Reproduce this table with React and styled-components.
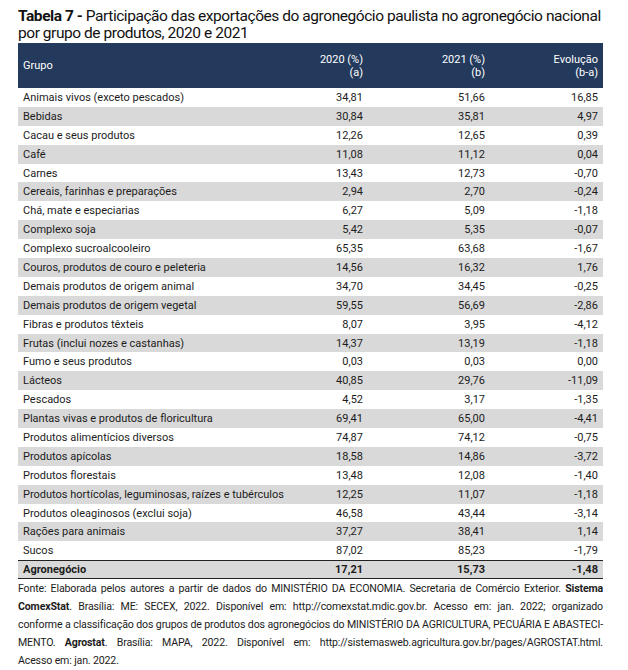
import React from "react";
import styled, { createGlobalStyle } from "styled-components";

const rows = [
  ["Animais vivos (exceto pescados)", "34,81", "51,66", "16,85"],
  ["Bebidas", "30,84", "35,81", "4,97"],
  ["Cacau e seus produtos", "12,26", "12,65", "0,39"],
  ["Café", "11,08", "11,12", "0,04"],
  ["Carnes", "13,43", "12,73", "-0,70"],
  ["Cereais, farinhas e preparações", "2,94", "2,70", "-0,24"],
  ["Chá, mate e especiarias", "6,27", "5,09", "-1,18"],
  ["Complexo soja", "5,42", "5,35", "-0,07"],
  ["Complexo sucroalcooleiro", "65,35", "63,68", "-1,67"],
  ["Couros, produtos de couro e peleteria", "14,56", "16,32", "1,76"],
  ["Demais produtos de origem animal", "34,70", "34,45", "-0,25"],
  ["Demais produtos de origem vegetal", "59,55", "56,69", "-2,86"],
  ["Fibras e produtos têxteis", "8,07", "3,95", "-4,12"],
  ["Frutas (inclui nozes e castanhas)", "14,37", "13,19", "-1,18"],
  ["Fumo e seus produtos", "0,03", "0,03", "0,00"],
  ["Lácteos", "40,85", "29,76", "-11,09"],
  ["Pescados", "4,52", "3,17", "-1,35"],
  ["Plantas vivas e produtos de floricultura", "69,41", "65,00", "-4,41"],
  ["Produtos alimentícios diversos", "74,87", "74,12", "-0,75"],
  ["Produtos apícolas", "18,58", "14,86", "-3,72"],
  ["Produtos florestais", "13,48", "12,08", "-1,40"],
  ["Produtos hortícolas, leguminosas, raízes e tubérculos", "12,25", "11,07", "-1,18"],
  ["Produtos oleaginosos (exclui soja)", "46,58", "43,44", "-3,14"],
  ["Rações para animais", "37,27", "38,41", "1,14"],
  ["Sucos", "87,02", "85,23", "-1,79"],
];

const GlobalStyle = createGlobalStyle`
  body {
    margin: 0;
    background: #ffffff;
    font-family: Roboto, "Liberation Sans", sans-serif;
    color: #1c1c1c;
  }
`;

const Page = styled.div`
  width: 585px;
  padding: 8px 0 0 18px;
`;

const Title = styled.h1`
  margin: 0 0 1px;
  font-size: 15.5px;
  font-weight: 400;
  line-height: 17px;
  color: #111;
  letter-spacing: -0.45px;
  b {
    font-weight: 700;
  }
`;

const TitleLine = styled.span`
  display: block;
  white-space: nowrap;
`;

const Grid = styled.div`
  display: grid;
  grid-template-columns: 230px 120px 122px 113px;
`;

const Head = styled(Grid)`
  background: #243a5c;
  color: #ffffff;
  height: 45px;
  align-items: center;
  font-size: 11px;
  line-height: 13px;
`;

const Cell = styled.div`
  padding: ${(p) => (p.$left ? "0 0 0 5px" : "0 5px 0 0")};
  text-align: ${(p) => (p.$left ? "left" : "right")};
  white-space: nowrap;
`;

const Row = styled(Grid)`
  height: 18.9px;
  align-items: center;
  font-size: 11px;
  background: ${(p) => (p.$shade ? "#d9d9d9" : "#ffffff")};
`;

const TotalRow = styled(Row)`
  height: 17px;
  background: #d9d9d9;
  border-top: 1px solid #222;
  border-bottom: 1px solid #222;
  font-weight: 700;
`;

const Source = styled.div`
  margin-top: 1px;
  font-size: 10.6px;
  line-height: 18px;
  letter-spacing: -0.15px;
  b {
    font-weight: 700;
  }
`;

const SourceLine = styled.div`
  white-space: nowrap;
  text-align: justify;
  text-align-last: ${(p) => (p.$last ? "left" : "justify")};
`;

export default function App() {
  return (
    <Page>
      <GlobalStyle />
      <Title>
        <TitleLine>
          <b>Tabela 7 -</b> Participação das exportações do agronegócio paulista no agronegócio
          nacional
        </TitleLine>
        <TitleLine>por grupo de produtos, 2020 e 2021</TitleLine>
      </Title>
      <Head>
        <Cell $left>Grupo</Cell>
        <Cell>
          2020 (%)
          <br />
          (a)
        </Cell>
        <Cell>
          2021 (%)
          <br />
          (b)
        </Cell>
        <Cell>
          Evolução
          <br />
          (b-a)
        </Cell>
      </Head>
      {rows.map((r, i) => (
        <Row key={r[0]} $shade={i % 2 === 1}>
          <Cell $left>{r[0]}</Cell>
          <Cell>{r[1]}</Cell>
          <Cell>{r[2]}</Cell>
          <Cell>{r[3]}</Cell>
        </Row>
      ))}
      <TotalRow>
        <Cell $left>Agronegócio</Cell>
        <Cell>17,21</Cell>
        <Cell>15,73</Cell>
        <Cell>-1,48</Cell>
      </TotalRow>
      <Source>
        <SourceLine>
          Fonte: Elaborada pelos autores a partir de dados do MINISTÉRIO DA ECONOMIA. Secretaria de
          Comércio Exterior. <b>Sistema</b>
        </SourceLine>
        <SourceLine>
          <b>ComexStat</b>. Brasília: ME: SECEX, 2022. Disponível em: http://comexstat.mdic.gov.br.
          Acesso em: jan. 2022; organizado
        </SourceLine>
        <SourceLine>
          conforme a classificação dos grupos de produtos dos agronegócios do MINISTÉRIO DA
          AGRICULTURA, PECUÁRIA E ABASTECI-
        </SourceLine>
        <SourceLine>
          MENTO. <b>Agrostat</b>. Brasília: MAPA, 2022. Disponível em:
          http://sistemasweb.agricultura.gov.br/pages/AGROSTAT.html.
        </SourceLine>
        <SourceLine $last>Acesso em: jan. 2022.</SourceLine>
      </Source>
    </Page>
  );
}
